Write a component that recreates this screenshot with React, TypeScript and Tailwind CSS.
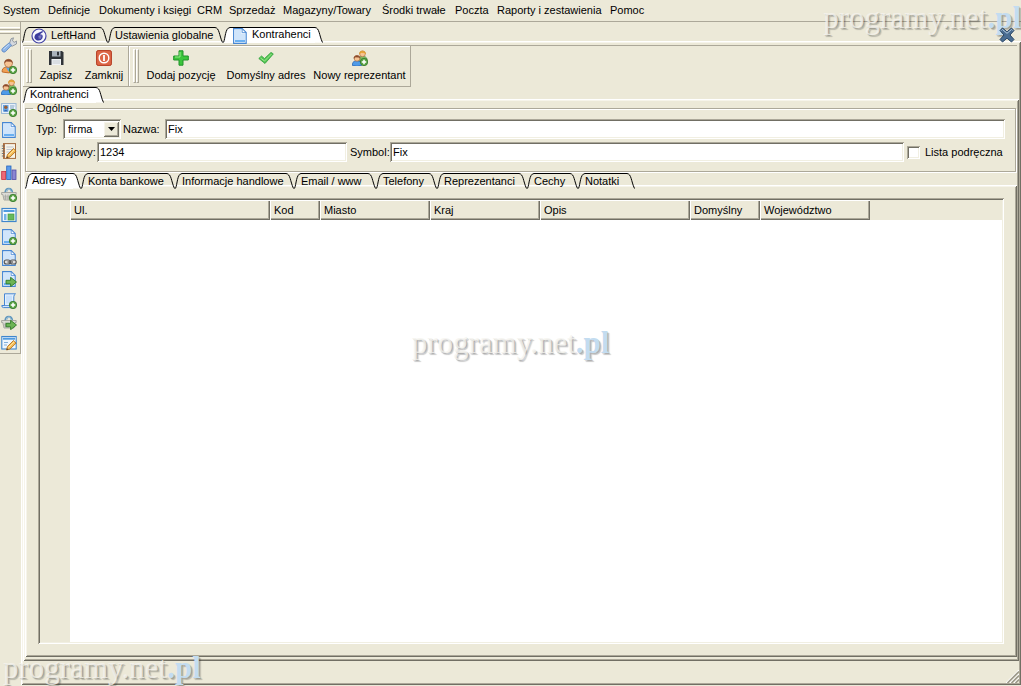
import type { ReactNode } from "react";

const raised =
  "shadow-[inset_1px_1px_0_#fff,inset_-1px_-1px_0_#716f64,inset_2px_2px_0_#f6f4ea,inset_-2px_-2px_0_#aca899]";
const raisedCell =
  "shadow-[inset_1px_1px_0_#fff,inset_-1px_-1px_0_#716f64,inset_-2px_-2px_0_#aca899]";
const sunken =
  "shadow-[inset_1px_1px_0_#aca899,inset_-1px_-1px_0_#fff,inset_2px_2px_0_#716f64,inset_-2px_-2px_0_#f1efe2]";

function Icon({ children }: { children: ReactNode }) {
  return (
    <svg viewBox="0 0 16 16" className="block size-4 shrink-0" aria-hidden="true">
      {children}
    </svg>
  );
}

function PlusBadge() {
  return (
    <g>
      <circle cx="12" cy="12" r="3.7" fill="#5fa648" stroke="#2f7526" strokeWidth=".8" />
      <path d="M12 9.8v4.4M9.8 12h4.4" stroke="#fff" strokeWidth="1.5" />
    </g>
  );
}

function ArrowBadge() {
  return (
    <path d="M5 9.3h4.600V6.300L15.500 11 9.600 15.700V12.800H5z" fill="#6cb454" stroke="#2f7a26" strokeWidth=".9" />
  );
}

function Sheet() {
  return (
    <g>
      <path d="M1.6.6h8.6l4 4v10.8H1.6z" fill="#eaf4fe" stroke="#4686d3" strokeWidth="1.1" />
      <path d="M3 2h6.200v4h3.800v6H3z" fill="#d0e5fb" />
      <path d="M10.2.8v3.8h3.8z" fill="#fff" stroke="#4686d3" strokeWidth=".8" />
      <path d="M3 13h10" stroke="#5ca9f0" strokeWidth="1.8" />
    </g>
  );
}

function Person({ x, y, hair, body, edge }: { x: number; y: number; hair: string; body: string; edge: string }) {
  return (
    <g transform={`translate(${x} ${y})`}>
      <path d="M.5 11V9.2C.8 7.2 2.4 6.4 5 6.4s4.2.8 4.5 2.8V11q-4.5 1.5-9 0z" fill={body} stroke={edge} strokeWidth=".8" />
      <circle cx="5" cy="3.8" r="2.9" fill="#f6c493" stroke="#a8683a" strokeWidth=".6" />
      <path d="M2 3.9C1.7.2 8.3.2 8 3.9L7.2 2.7 3.6 2.5z" fill={hair} stroke={hair} strokeWidth=".6" />
    </g>
  );
}

function Basket() {
  return (
    <g>
      <path d="M4 7C4.5 1 11 1 11.5 7" fill="none" stroke="#5f96bd" strokeWidth="1.6" />
      <path d="M5.5 6L8 2.5 10.5 6" fill="none" stroke="#8fb8d6" strokeWidth="1" />
      <path d="M.6 6.5h14.6v2H14l-1 5.5H3L1.8 8.500H.6z" fill="#dcdcd6" stroke="#9b9b96" strokeWidth=".8" />
      <path d="M2.5 10.2h11M3 12h10M4.5 8.500V14M7 8.500V14M9.500 8.500V14" stroke="#a3a39d" strokeWidth=".7" />
    </g>
  );
}

function Pencil() {
  return (
    <g>
      <path d="M5.5 15l1-3.500 6-6 2.600 2.500-6 6z" fill="#f6bd55" stroke="#a76519" strokeWidth=".8" />
      <path d="M7.5 12.500l5.700-5.700" stroke="#ffe3a0" strokeWidth="1" />
      <path d="M5.5 15l.5-1.800 1.400 1.300z" fill="#4b3420" />
    </g>
  );
}

const twoPeople = (
  <Icon>
    <Person x={5.5} y={0} hair="#e3a02a" body="#7fbf63" edge="#3f8433" />
    <Person x={0} y={4.5} hair="#8a4a2c" body="#4f9be8" edge="#2463b4" />
    <PlusBadge />
  </Icon>
);

const sideGroups: { label: string; icon: ReactNode }[][] = [
  [
    {
      label: "Ustawienia",
      icon: (
        <Icon>
          <path d="M8.500 6.500L10 1.800 12.500.8 11.500 3.800l1.700 1.500 2.500-1.300-.3 3-4.200 2.200-1.700-.4z" fill="#d5d9de" stroke="#808993" strokeWidth=".8" />
          <path d="M8.200 5.800l2.400 2.400-6 6.300q-1.600 1.400-3.200-.1-1.400-1.500.1-3z" fill="#8db5e8" stroke="#5784c0" strokeWidth=".8" />
          <path d="M2.500 12.200l5.700-5" stroke="#c8dcf6" strokeWidth="1" />
        </Icon>
      ),
    },
    {
      label: "Nowy kontrahent",
      icon: (
        <Icon>
          <path d="M1.200 14V12.200C1.800 9.800 3.500 9 7.500 9s5.700.8 6.300 3.200V14q-6.300 1.800-12.600 0z" fill="#f0a053" stroke="#b55c1b" strokeWidth=".8" />
          <path d="M5 9.500h5l-2.500 4z" fill="#5ba3ea" />
          <circle cx="7.500" cy="5.300" r="4" fill="#f6c493" stroke="#a8683a" strokeWidth=".7" />
          <path d="M3.300 5.500C2.700-.3 12.300-.3 11.700 5.500L10.300 3.800 5.300 3.500z" fill="#8a4a2c" />
          <PlusBadge />
        </Icon>
      ),
    },
    { label: "Nowa grupa", icon: twoPeople },
  ],
  [
    {
      label: "Nowa wizytówka",
      icon: (
        <Icon>
          <rect x=".6" y="2.600" width="14.400" height="9.800" fill="#f2f7fc" stroke="#95b4d3" />
          <rect x="2" y="4" width="5.500" height="6.500" fill="#66a7e6" />
          <circle cx="4.800" cy="6.200" r="1.700" fill="#9a5e35" />
          <path d="M2.500 10.500q2.300-3.500 4.600 0z" fill="#3568b5" />
          <path d="M9 5h4.500M9 7h4" stroke="#7d9fc2" />
          <PlusBadge />
        </Icon>
      ),
    },
    { label: "Dokument", icon: <Icon><Sheet /></Icon> },
    {
      label: "Notatnik",
      icon: (
        <Icon>
          <rect x="2.500" y=".6" width="12" height="14.800" fill="#f7f3e7" stroke="#a36b3e" />
          <path d="M3 1v14" stroke="#b26c37" strokeWidth="1.800" />
          <path d="M.8 3h3M.8 5.500h3M.8 8h3M.8 10.500h3M.8 13h3" stroke="#6e6e6e" strokeWidth=".9" />
          <path d="M5.500 4h7M5.500 6.500h7M5.500 9h4" stroke="#b8c2cc" strokeWidth=".9" />
          <Pencil />
        </Icon>
      ),
    },
  ],
  [
    {
      label: "Wykres",
      icon: (
        <Icon>
          <rect x=".7" y="6.500" width="4" height="8" fill="#ee6a78" stroke="#c5303f" strokeWidth=".8" />
          <rect x="5.700" y="1" width="4.300" height="13.500" fill="#5b9bec" stroke="#2463bb" strokeWidth=".8" />
          <rect x="11" y="5" width="4" height="9.500" fill="#8a86d2" stroke="#514ba4" strokeWidth=".8" />
        </Icon>
      ),
    },
    { label: "Nowe zamówienie", icon: <Icon><Basket /><PlusBadge /></Icon> },
    {
      label: "Układ strony",
      icon: (
        <Icon>
          <rect x="1" y="1.500" width="14" height="13" fill="#f4fafe" stroke="#3f86cc" strokeWidth="1.200" />
          <path d="M2.500 4h11" stroke="#4f9bdf" strokeWidth="2" />
          <rect x="3" y="7" width="2.500" height="6" fill="#73b2e8" />
          <rect x="7" y="7" width="6" height="6" fill="#66b95c" stroke="#459b40" strokeWidth=".7" />
        </Icon>
      ),
    },
  ],
  [
    { label: "Nowy dokument", icon: <Icon><Sheet /><PlusBadge /></Icon> },
    {
      label: "Powiązany dokument",
      icon: (
        <Icon>
          <Sheet />
          <rect x="3.200" y="10" width="6" height="4" rx="2" fill="#ddd" stroke="#555" strokeWidth="1.100" />
          <rect x="9.200" y="10" width="6" height="4" rx="2" fill="#ddd" stroke="#555" strokeWidth="1.100" />
          <path d="M6.500 12h5.500" stroke="#555" strokeWidth="1.200" />
        </Icon>
      ),
    },
    { label: "Wyślij dokument", icon: <Icon><Sheet /><ArrowBadge /></Icon> },
  ],
  [
    {
      label: "Nowy skrypt",
      icon: (
        <Icon>
          <path d="M3.500.8h11q-1.700 1-1.700 3v8.500q0 2.300-2 2.300H2.500Q.6 14.500.8 12.500h2.700z" fill="#e3f0fd" stroke="#4686d3" />
          <path d="M1 12.600h8.500q0 2 1.500 2" fill="none" stroke="#4686d3" strokeWidth=".9" />
          <path d="M5 2.500h6v8H5z" fill="#c8e0fa" />
          <PlusBadge />
        </Icon>
      ),
    },
    { label: "Wyślij zamówienie", icon: <Icon><Basket /><ArrowBadge /></Icon> },
    {
      label: "Edytuj formularz",
      icon: (
        <Icon>
          <rect x=".8" y="1.500" width="14.400" height="12.500" fill="#eef6fd" stroke="#3f86cc" strokeWidth="1.100" />
          <path d="M2 3.700h12" stroke="#4f9bdf" strokeWidth="2" />
          <path d="M3 7.500h4M3 10h3" stroke="#82aedb" />
          <Pencil />
        </Icon>
      ),
    },
  ],
];

const saveIcon = (
  <Icon>
    <path d="M1 1h13l1.500 1.500V15H1z" fill="#2f3338" />
    <rect x="4" y="1" width="8.500" height="5.500" fill="#aab3bc" />
    <rect x="9" y="1.800" width="2" height="3.600" fill="#2f3338" />
    <rect x="3.500" y="9" width="9.500" height="6" fill="#f0f3f5" />
    <path d="M4.500 11h7.500M4.500 13h7.500" stroke="#c3cad0" />
  </Icon>
);

const powerIcon = (
  <Icon>
    <rect x=".6" y=".6" width="14.800" height="14.800" rx="1.500" fill="#dd6646" stroke="#b33a20" />
    <circle cx="8" cy="8" r="4.800" fill="none" stroke="#fff" strokeWidth="1.400" />
    <path d="M8 5v6" stroke="#fff" strokeWidth="1.800" />
  </Icon>
);

const addIcon = (
  <Icon>
    <path d="M6 .8h4V6h5.300v4H10v5.200H6V10H.7V6H6z" fill="#3cc53c" stroke="#21932a" />
    <path d="M7 2v5H2" fill="none" stroke="#93ec88" />
  </Icon>
);

const checkIcon = (
  <Icon>
    <path d="M.8 8.500L3.500 6 6.500 8.600 13 2.400l2.300 1.500L7 13.500z" fill="#55c653" stroke="#2da03a" strokeWidth=".8" />
    <path d="M2.500 8L6.500 11 13.500 4" fill="none" stroke="#9ce58f" />
  </Icon>
);

const handIcon = (
  <Icon>
    <circle cx="8" cy="8" r="7" fill="#f8f8ff" stroke="#4444a4" strokeWidth="1.200" />
    <path d="M3.400 9.800Q3.400 6.500 6 5.600L11.300 3l.8 1-3.200 2.300 2.300.4q1 1.300.2 3.600-1.300 2.500-4 2.300-3 0-4-2.800z" fill="#3c3c9e" />
    <path d="M7.500 8.300l3-.3M7.600 9.900h2.600" stroke="#c9c9ee" strokeWidth=".7" />
  </Icon>
);

function Tab({
  children,
  width,
  active = false,
  icon,
}: {
  children: ReactNode;
  width: string;
  active?: boolean;
  icon?: ReactNode;
}) {
  const fill = active ? "#fff" : "none";
  return (
    <button type="button" role="tab" aria-selected={active} className={`flex h-4 shrink-0 ${width}`}>
      <svg viewBox="0 0 7 16" className="h-4 w-[7px] shrink-0" aria-hidden="true">
        <path d="M0 15.500C2 11 2 1 7 .5V16H0z" fill={fill} />
        <path d="M.5 15.500C2.500 11 2 1 7 .5" fill="none" stroke="#000" />
      </svg>
      <span className={`flex h-4 min-w-0 flex-1 gap-1 border-t border-black whitespace-nowrap ${icon ? "pl-[2px]" : ""} ${active ? "bg-white" : ""}`}>
        {icon}
        <span className={active ? "leading-[13px]" : "leading-[15px]"}>{children}</span>
      </span>
      <svg viewBox="0 0 8 16" className="h-4 w-2 shrink-0" aria-hidden="true">
        <path d="M0 .5C4.500 1 4 8 7.500 15.500H0z" fill={fill} />
        <path d="M0 .5C4.500 1 4 8 7.500 15.500" fill="none" stroke="#000" />
      </svg>
    </button>
  );
}

function Grip() {
  return (
    <span className="flex py-[3px]">
      <span className="w-[3px] border border-t-white border-r-[#aca899] border-b-[#aca899] border-l-white" />
      <span className="w-[3px] border border-t-white border-r-[#aca899] border-b-[#aca899] border-l-white" />
    </span>
  );
}

function ToolButton({ label, icon, width }: { label: string; icon: ReactNode; width: string }) {
  return (
    <button type="button" className={`flex flex-col items-center gap-[2px] pt-1 whitespace-nowrap ${width}`}>
      {icon}
      <span className="leading-[14px]">{label}</span>
    </button>
  );
}

function Watermark({ place }: { place: string }) {
  return (
    <div
      className={`pointer-events-none absolute font-['Liberation_Serif',serif] text-[31px] leading-9 whitespace-nowrap text-[#f4f3ee]/80 [text-shadow:1px_1px_0_rgba(0,0,0,0.14),2px_2px_1px_rgba(0,0,0,0.22)] ${place}`}
    >
      programy.net<span className="font-bold text-[#c3dcf0]">.pl</span>
    </div>
  );
}

const menu = [
  { label: "System", width: "w-[45px]" },
  { label: "Definicje", width: "w-[51px]" },
  { label: "Dokumenty i księgi", width: "w-[98px]" },
  { label: "CRM", width: "w-[32px]" },
  { label: "Sprzedaż", width: "w-[54px]" },
  { label: "Magazyny/Towary", width: "w-[99px]" },
  { label: "Środki trwałe", width: "w-[73px]" },
  { label: "Poczta", width: "w-[42px]" },
  { label: "Raporty i zestawienia", width: "w-[113px]" },
  { label: "Pomoc", width: "w-[40px]" },
];

const detailTabs = [
  { label: "Adresy", width: "w-[56px]" },
  { label: "Konta bankowe", width: "w-[94px]" },
  { label: "Informacje handlowe", width: "w-[119px]" },
  { label: "Email / www", width: "w-[82px]" },
  { label: "Telefony", width: "w-[61px]" },
  { label: "Reprezentanci", width: "w-[90px]" },
  { label: "Cechy", width: "w-[51px]" },
  { label: "Notatki", width: "w-[57px]" },
];

const columns = [
  { label: "Ul.", width: "w-[200px]" },
  { label: "Kod", width: "w-[50px]" },
  { label: "Miasto", width: "w-[110px]" },
  { label: "Kraj", width: "w-[110px]" },
  { label: "Opis", width: "w-[150px]" },
  { label: "Domyślny", width: "w-[70px]" },
  { label: "Województwo", width: "w-[110px]" },
];

const field = `h-5 min-w-0 bg-white px-[3px] outline-none ${sunken}`;

export default function App() {
  return (
    <div className="relative flex min-h-screen flex-col bg-[#ece9d8] font-['Liberation_Sans',Arial,sans-serif] text-[11px] text-black">
      <nav className="flex h-[22px] shrink-0 items-center border-b border-[#aca899] pl-[3px]">
        {menu.map((m) => (
          <button key={m.label} type="button" className={`shrink-0 text-left whitespace-nowrap ${m.width}`}>
            {m.label}
          </button>
        ))}
      </nav>

      <div className="flex flex-1">
        <aside className="flex w-[21px] shrink-0 flex-col">
          <div className="flex flex-col border-r border-b border-[#aca899] pt-[5px]">
            <span className="h-[3px] border-t border-b border-t-white border-b-[#aca899]" />
            <span className="mt-px h-[3px] border-t border-b border-t-white border-b-[#aca899]" />
            <div className="flex flex-col gap-px">
              {sideGroups.map((group, i) => (
                <div key={i} className="flex flex-col">
                  {group.map((b) => (
                    <button key={b.label} type="button" aria-label={b.label} className="flex h-[21px] items-center pl-px">
                      {b.icon}
                    </button>
                  ))}
                </div>
              ))}
            </div>
          </div>
        </aside>

        <main className="flex min-w-0 flex-1 flex-col pt-[5px] pb-px">
          <div className="relative z-10 -mb-[2px] flex items-start pl-px">
            <div role="tablist" className="flex">
              <Tab width="w-[86px]" icon={handIcon}>LeftHand</Tab>
              <Tab width="w-[115px]">Ustawienia globalne</Tab>
              <Tab width="w-[100px]" active icon={<Icon><Sheet /></Icon>}>Kontrahenci</Tab>
            </div>
            <button type="button" aria-label="Zamknij kartę" className="mr-[6px] ml-auto">
              <Icon>
                <path d="M1 3.500L3.500 1 8 4.800 12.500 1 15 3.500 11 8l4 4.500-2.500 2.500L8 11.200 3.500 15 1 12.500 5 8z" fill="#4a6d92" stroke="#2b4766" />
                <path d="M2.500 3.500l1-1L8 6.300l4.500-3.800 1 1" fill="none" stroke="#b4cbe0" />
              </Icon>
            </button>
          </div>

          <section className={`flex flex-1 flex-col p-[2px] ${raised}`}>
            <div className="mt-[2px] mr-[2px] flex border-t border-[#aca899]">
              <div className="flex h-[41px] border-r border-b border-[#aca899] pl-[3px] shadow-[inset_1px_1px_0_#fff]">
                <Grip />
                <ToolButton width="w-[48px]" label="Zapisz" icon={saveIcon} />
                <ToolButton width="w-[48px]" label="Zamknij" icon={powerIcon} />
              </div>
              <div className="flex h-[41px] border-r border-b border-[#aca899] pl-1 shadow-[inset_1px_1px_0_#fff]">
                <Grip />
                <ToolButton width="w-[84px]" label="Dodaj pozycję" icon={addIcon} />
                <ToolButton width="w-[86px]" label="Domyślny adres" icon={checkIcon} />
                <ToolButton width="w-[101px]" label="Nowy reprezentant" icon={twoPeople} />
              </div>
            </div>

            <div role="tablist" className="relative z-10 -mb-1 flex">
              <Tab width="w-[81px]" active>Kontrahenci</Tab>
            </div>

            <section className={`flex flex-1 flex-col px-[2px] pt-[2px] pb-1 ${raised}`}>
              <fieldset className="mr-px min-w-0 border border-[#aca899] px-[7px] pb-[9px] shadow-[inset_1px_1px_0_#fff,1px_1px_0_#fff]">
                <legend className="px-1 leading-[14px]">Ogólne</legend>
                <div className="flex flex-col gap-[3px] pt-1 pr-[3px] pl-[3px]">
                  <div className="flex items-center">
                    <label htmlFor="typ" className="w-[27px] shrink-0">Typ:</label>
                    <div className={`relative h-5 w-[58px] shrink-0 bg-white p-[2px] ${sunken}`}>
                      <select id="typ" className="h-4 w-full appearance-none pl-[3px] leading-4 outline-none">
                        <option>firma</option>
                      </select>
                      <span className={`pointer-events-none absolute top-[2px] right-[2px] flex h-4 w-4 items-center justify-center bg-[#ece9d8] ${raised}`}>
                        <svg viewBox="0 0 7 4" className="h-1 w-[7px]" aria-hidden="true">
                          <path d="M0 0h7L3.500 4z" />
                        </svg>
                      </span>
                    </div>
                    <label htmlFor="nazwa" className="w-[44px] shrink-0 pl-[2px]">Nazwa:</label>
                    <input id="nazwa" defaultValue="Fix" className={`flex-1 ${field}`} />
                  </div>
                  <div className="flex items-center">
                    <label htmlFor="nip" className="w-[61px] shrink-0 whitespace-nowrap">Nip krajowy:</label>
                    <input id="nip" defaultValue="1234" className={`w-[250px] ${field}`} />
                    <label htmlFor="symbol" className="w-[43px] shrink-0 pl-[3px]">Symbol:</label>
                    <input id="symbol" defaultValue="Fix" className={`flex-1 ${field}`} />
                    <input id="lista" type="checkbox" className={`ml-[3px] size-[13px] shrink-0 appearance-none bg-white ${sunken}`} />
                    <label htmlFor="lista" className="w-[85px] shrink-0 pl-[5px] whitespace-nowrap">Lista podręczna</label>
                  </div>
                </div>
              </fieldset>

              <div role="tablist" className="relative z-10 mt-px -mb-1 flex">
                {detailTabs.map((t, i) => (
                  <Tab key={t.label} width={t.width} active={i === 0}>
                    {t.label}
                  </Tab>
                ))}
              </div>

              <section className={`flex flex-1 flex-col p-[13px] ${raised}`}>
                <div className={`flex flex-1 p-[2px] ${sunken}`}>
                  <div className="w-[30px] shrink-0" />
                  <div className="min-w-0 flex-1 bg-white">
                    <table className="w-full table-fixed border-collapse bg-[#ece9d8]">
                      <thead>
                        <tr>
                          {columns.map((c) => (
                            <th key={c.label} scope="col" className={`h-5 p-0 pl-1 text-left font-normal ${raisedCell} ${c.width}`}>
                              {c.label}
                            </th>
                          ))}
                          <td />
                        </tr>
                      </thead>
                      <tbody />
                    </table>
                  </div>
                </div>
              </section>
            </section>

            <footer className="flex h-[22px] shrink-0 items-end justify-end">
              <svg viewBox="0 0 13 13" className="size-[13px]" aria-hidden="true">
                <path d="M0 13L13 0M4 13l9-9M8 13l5-5" stroke="#fff" strokeWidth="1.200" />
                <path d="M1.500 13L13 1.500M5.500 13L13 5.500M9.500 13L13 9.500" stroke="#9d9a8b" strokeWidth="1.600" />
              </svg>
            </footer>
          </section>
        </main>
      </div>

      <Watermark place="top-0 right-0" />
      <Watermark place="top-1/2 left-1/2 -translate-x-1/2 -translate-y-1/2" />
      <Watermark place="bottom-0 left-[3px]" />
    </div>
  );
}
